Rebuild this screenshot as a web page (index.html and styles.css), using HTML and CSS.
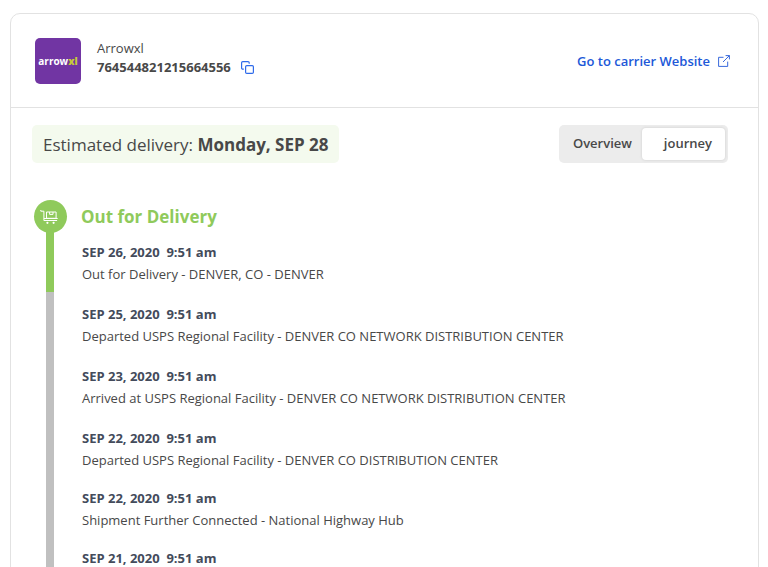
FILE: index.html
```html
<!DOCTYPE html>
<html lang="en">
<head>
<meta charset="utf-8">
<meta name="viewport" content="width=device-width, initial-scale=1">
<title>Arrowxl tracking</title>
<link rel="stylesheet" href="styles.css">
</head>
<body>
<main class="card">
  <header class="head">
    <div class="logo" aria-hidden="true"><span>arrow<b>xl</b></span></div>
    <div class="carrier">
      <div class="name">Arrowxl</div>
      <div class="number">
        <span>764544821215664556</span>
        <button class="copy" type="button" aria-label="Copy tracking number">
          <svg width="13" height="13" viewBox="0 0 13 13" fill="none" stroke="currentColor" stroke-width="1.2">
            <rect x="4.6" y="4.6" width="7.8" height="7.8" rx="1.2"/>
            <path d="M2.8 8.2H1.8A1.2 1.2 0 0 1 .6 7V1.8A1.2 1.2 0 0 1 1.8.6H7a1.2 1.2 0 0 1 1.2 1.2v.9"/>
          </svg>
        </button>
      </div>
    </div>
    <a class="site" href="#">Go to carrier Website
      <svg width="12" height="12" viewBox="0 0 12 12" fill="none" stroke="currentColor" stroke-width=".9">
        <path d="M5.5 2.3H.6v9.1h9.1V6.6M7.6.6h3.8v3.8M11.4.6 5 7"/>
      </svg>
    </a>
  </header>
  <section class="bar">
    <p class="estimate">Estimated delivery: <strong>Monday, SEP 28</strong></p>
    <div class="tabs">
      <button class="tab" type="button">Overview</button>
      <button class="tab active" type="button">journey</button>
    </div>
  </section>
  <section class="timeline">
    <div class="rail">
      <div class="badge">
        <svg width="20" height="16" viewBox="0 0 20 16" fill="none" stroke="currentColor" stroke-width="1">
          <path d="M.8 1v1.2h3.1v9.3h13.2M3.9 9.5h13.8"/>
          <path d="M6.5 3h9.6v6.3H6.5z"/>
          <path d="M9.6 3v2.4h3.4V3"/>
          <circle cx="7.4" cy="13.8" r="1.1" fill="currentColor" stroke="none"/>
          <circle cx="13.6" cy="13.8" r="1.1" fill="currentColor" stroke="none"/>
        </svg>
      </div>
      <div class="done"></div>
      <div class="past"></div>
    </div>
    <div class="events">
      <h2>Out for Delivery</h2>
      <ol>
        <li><time>SEP 26, 2020&nbsp; 9:51 am</time><p>Out for Delivery - DENVER, CO - DENVER</p></li>
        <li><time>SEP 25, 2020&nbsp; 9:51 am</time><p>Departed USPS Regional Facility - DENVER CO NETWORK DISTRIBUTION CENTER</p></li>
        <li><time>SEP 23, 2020&nbsp; 9:51 am</time><p>Arrived at USPS Regional Facility - DENVER CO NETWORK DISTRIBUTION CENTER</p></li>
        <li class="tight"><time>SEP 22, 2020&nbsp; 9:51 am</time><p>Departed USPS Regional Facility - DENVER CO DISTRIBUTION CENTER</p></li>
        <li class="tight"><time>SEP 22, 2020&nbsp; 9:51 am</time><p>Shipment Further Connected - National Highway Hub</p></li>
        <li class="tight"><time>SEP 21, 2020&nbsp; 9:51 am</time></li>
      </ol>
    </div>
  </section>
</main>
</body>
</html>
```
FILE: styles.css
```css
* { box-sizing: border-box; }

body {
  margin: 0;
  height: 100vh;
  overflow: hidden;
  background: #fff;
  color: #484848;
  font: 13px/20px "Open Sans", "Noto Sans", sans-serif;
}

p, h2, ol { margin: 0; padding: 0; }
ol { list-style: none; }
button { font: inherit; color: inherit; border: 0; padding: 0; background: none; cursor: pointer; }
svg { display: block; flex: none; }

.card {
  display: flex;
  flex-direction: column;
  min-height: 100vh;
  margin: 13px 9px 0 10px;
  border: 1px solid #e2e2e2;
  border-radius: 10px;
}

.head {
  display: flex;
  align-items: center;
  padding: 24px 28px 23px 24px;
  border-bottom: 1px solid #e2e2e2;
}

.logo {
  display: grid;
  place-items: center;
  width: 46px;
  height: 46px;
  border-radius: 5px;
  background: #7135a3;
  color: #fff;
  font-size: 10px;
  font-weight: 700;
}
.logo b { color: #c5c93a; }

.carrier { align-self: flex-start; margin-left: 16px; padding-top: 1px; line-height: 19px; }
.name { font-weight: 500; }
.number { display: flex; align-items: center; gap: 10px; font-weight: 700; }
.copy { color: #2f6bea; }

.site {
  display: flex;
  align-items: center;
  gap: 8px;
  margin-left: auto;
  color: #2158d8;
  font-weight: 600;
  text-decoration: none;
}

.bar {
  display: flex;
  align-items: center;
  justify-content: space-between;
  padding: 17px 30px 0 21px;
}

.estimate {
  padding: 9px 10px 7px 11px;
  border-radius: 5px;
  background: #f4faee;
  font-size: 17px;
  line-height: 22px;
}

.tabs {
  display: flex;
  padding: 3px;
  border-radius: 5px;
  background: #ececec;
}
.tab { padding: 5px 10px 7px 11px; font-weight: 600; }
.tab.active {
  padding: 5px 13px 7px 22px;
  border-radius: 4px;
  background: #fff;
  box-shadow: 0 0 2px 1px #ddd;
}

.timeline {
  display: flex;
  flex: 1;
  gap: 14px;
  padding: 37px 22px 0 22px;
}

.rail { display: flex; flex-direction: column; align-items: center; width: 34px; }
.badge {
  display: grid;
  place-items: center;
  width: 33px;
  height: 33px;
  border-radius: 50%;
  background: #8fca5b;
  color: #fff;
}
.done { width: 8px; height: 61px; margin-top: -2px; background: #8fca5b; }
.past { width: 8px; flex: 1; background: #c0c0c0; }

.events h2 { color: #8fca5b; font-size: 17px; line-height: 34px; font-weight: 700; }
.events ol { padding: 7px 0 0 1px; }
.events li { margin-bottom: 18px; line-height: 22px; }
.events .tight { margin-bottom: 16px; }
.events time { display: block; color: #434b5b; font-weight: 700; }
```
